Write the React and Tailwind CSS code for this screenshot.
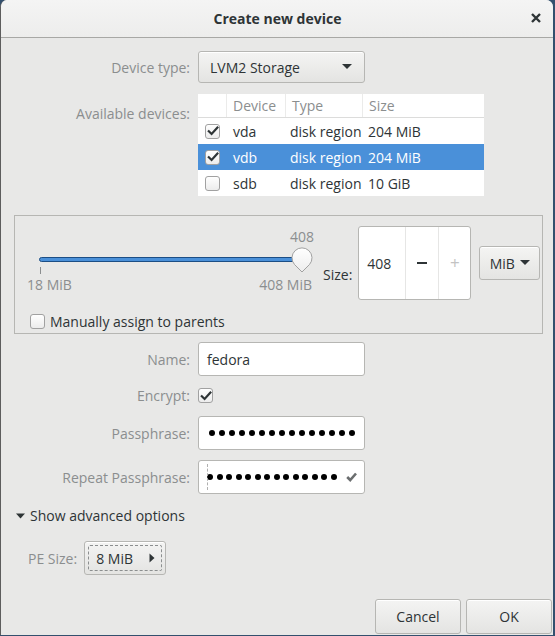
import React from "react";

const F = "font-['Open_Sans',sans-serif]";

function Check({ checked, className = "" }) {
  return (
    <div
      className={`w-[15px] h-[15px] rounded-[3px] border border-[#a1a1a1] bg-gradient-to-b from-white to-[#ececec] flex items-center justify-center shrink-0 ${className}`}
    >
      {checked && (
        <svg width="12" height="12" viewBox="0 0 12 12">
          <path d="M1.8 6.2 L4.6 9 L10.4 2.6" fill="none" stroke="#2e3436" strokeWidth="2.2" strokeLinecap="square" />
        </svg>
      )}
    </div>
  );
}

function Dots({ n, tight }) {
  return (
    <div className={`flex ${tight ? "gap-[3.5px]" : "gap-[4px]"}`}>
      {Array.from({ length: n }).map((_, i) => (
        <div key={i} className="w-[6px] h-[6px] rounded-full bg-black" />
      ))}
    </div>
  );
}

function Btn({ children, className = "" }) {
  return (
    <div
      className={`flex items-center rounded-[3px] border border-[#b6b6b3] bg-gradient-to-b from-[#f4f4f3] to-[#e4e4e2] shadow-[inset_0_1px_0_white] text-[#2e3436] ${className}`}
    >
      {children}
    </div>
  );
}

const Arrow = () => (
  <svg width="10" height="6" viewBox="0 0 10 6">
    <path d="M0 0 H10 L5 5 Z" fill="#2e3436" />
  </svg>
);

export default function App() {
  const rows = [
    { c: true, d: "vda", t: "disk region", s: "204 MiB", sel: false },
    { c: true, d: "vdb", t: "disk region", s: "204 MiB", sel: true },
    { c: false, d: "sdb", t: "disk region", s: "10 GiB", sel: false },
  ];
  return (
    <div className={`w-[555px] h-[636px] bg-[#33506e] ${F} text-[14px] text-[#2e3436] overflow-hidden`}>
      <div className="w-[553px] h-[635px] rounded-t-[7px] bg-[#e8e8e7] border-l border-[#5d5d5d] flex flex-col overflow-hidden">
        {/* header */}
        <div className="h-[38px] shrink-0 bg-gradient-to-b from-[#f4f4f4] to-[#ededec] border-b border-[#a8a8a5] flex items-center relative">
          <div className="flex-1 text-center font-bold text-[14px] text-[#2e3436] pl-[1px]">Create new device</div>
          <div className="absolute right-[11px] top-[12px]">
            <svg width="12" height="12" viewBox="0 0 12 12">
              <path d="M2 2 L10 10 M10 2 L2 10" stroke="#2e3436" strokeWidth="2.4" />
            </svg>
          </div>
        </div>

        {/* device type */}
        <div className="flex items-center mt-[13px] h-[32px]">
          <div className="w-[190px] text-right pr-[1px] text-[#8b8e8f]">Device type:</div>
          <Btn className="ml-[7px] w-[167px] h-[32px] justify-between pl-[11px] pr-[12px]">
            <span>LVM2 Storage</span>
            <Arrow />
          </Btn>
        </div>

        {/* available devices */}
        <div className="flex mt-[11px]">
          <div className="w-[190px] text-right pr-[1px] text-[#8b8e8f] pt-[9px]">Available devices:</div>
          <div className="ml-[7px] w-[286px] bg-white">
            <div className="flex h-[24px] items-center border-b border-[#dcdcdb] text-[#8b8e8f]">
              <div className="w-[29px] h-full border-r border-[#ebebea]" />
              <div className="w-[59px] h-full border-r border-[#ebebea] pl-[6px] flex items-center">Device</div>
              <div className="w-[77px] h-full border-r border-[#ebebea] pl-[6px] flex items-center">Type</div>
              <div className="flex-1 pl-[6px]">Size</div>
            </div>
            {rows.map((r) => (
              <div
                key={r.d}
                className={`flex items-center h-[26px] ${r.sel ? "bg-[#4a90d9] text-white" : ""}`}
              >
                <div className="w-[29px] flex justify-center">
                  <Check checked={r.c} />
                </div>
                <div className="w-[59px] pl-[6px]">{r.d}</div>
                <div className="w-[77px] pl-[4px]">{r.t}</div>
                <div className="flex-1 pl-[5px]">{r.s}</div>
              </div>
            ))}
          </div>
        </div>

        {/* size frame */}
        <div className="mx-[13px] mt-[19px] h-[119px] border border-[#b6b6b3] w-[529px] flex flex-col">
          <div className="flex items-start pt-[10px]">
            <div className="w-[293px] ml-[10px] relative h-[68px]">
              <div className="absolute left-[277px] top-[0px] text-[#8b8e8f] -translate-x-1/2">408</div>
              <div className="absolute left-[14px] right-[8px] top-[31px] h-[5px] rounded-full bg-[#4a90d9] border border-[#1c4e85]" />
              <div className="absolute left-[15px] top-[41px] w-px h-[7px] bg-[#8b8e8f]" />
              <div className="absolute left-[2px] top-[48px] text-[#8b8e8f]">18 MiB</div>
              <div className="absolute right-[6px] top-[48px] text-[#8b8e8f]">408 MiB</div>
              <svg className="absolute left-[266px] top-[21px]" width="22" height="26" viewBox="0 0 22 26">
                <defs>
                  <linearGradient id="kg" x1="0" y1="0" x2="0" y2="1">
                    <stop offset="0" stopColor="#ffffff" />
                    <stop offset="1" stopColor="#ededed" />
                  </linearGradient>
                </defs>
                <path d="M11 25 L3.5 17.5 A10 10 0 1 1 18.5 17.5 Z" fill="url(#kg)" stroke="#a1a1a1" strokeWidth="1" />
              </svg>
            </div>
            <div className="mt-[38px] ml-[5px] text-[#2e3436]">Size:</div>
            <div className="ml-[6px] w-[113px] h-[74px] bg-white border border-[#b6b6b3] rounded-[3px] flex">
              <div className="w-[46px] flex items-center pl-[8px]">408</div>
              <div className="w-[33px] border-l border-[#e6e6e5] flex items-center justify-center">
                <div className="w-[10px] h-[2px] bg-[#2e3436]" />
              </div>
              <div className="flex-1 border-l border-[#e6e6e5] flex items-center justify-center text-[#c3c3c3] text-[17px]">+</div>
            </div>
            <Btn className="ml-[8px] mt-[20px] w-[61px] h-[34px] gap-[5px] justify-center">
              <span>MiB</span>
              <Arrow />
            </Btn>
          </div>
          <div className="flex items-center mt-[11px] ml-[15px] gap-[5px]">
            <Check checked={false} />
            <span>Manually assign to parents</span>
          </div>
        </div>

        {/* form */}
        <div className="flex items-center mt-[8px] h-[34px]">
          <div className="w-[190px] text-right pr-[1px] text-[#8b8e8f]">Name:</div>
          <div className="ml-[7px] w-[167px] h-[34px] bg-white border border-[#b6b6b3] rounded-[3px] flex items-center pl-[8px]">fedora</div>
        </div>
        <div className="flex items-center mt-[12px] h-[15px]">
          <div className="w-[190px] text-right pr-[1px] text-[#8b8e8f]">Encrypt:</div>
          <Check checked className="ml-[7px]" />
        </div>
        <div className="flex items-center mt-[13px] h-[34px]">
          <div className="w-[190px] text-right pr-[1px] text-[#8b8e8f]">Passphrase:</div>
          <div className="ml-[7px] w-[167px] h-[34px] bg-white border border-[#b6b6b3] rounded-[3px] flex items-center pl-[10px]">
            <Dots n={15} />
          </div>
        </div>
        <div className="flex items-center mt-[10px] h-[34px]">
          <div className="w-[190px] text-right pr-[1px] text-[#8b8e8f]">Repeat Passphrase:</div>
          <div className="ml-[7px] w-[167px] h-[34px] bg-white border border-[#b6b6b3] rounded-[3px] flex items-center pl-[8px] relative">
            <div className="absolute left-[8px] top-[3px] bottom-[3px] border-l border-dashed border-[#b0b0b0]" />
            <Dots n={14} tight />
            <svg className="ml-[9px]" width="11" height="10" viewBox="0 0 11 10">
              <path d="M1.2 5 L4.2 8 L10 1.5" fill="none" stroke="#6b6e6f" strokeWidth="2.6" />
            </svg>
          </div>
        </div>

        <div className="flex items-center mt-[11px] ml-[15px] gap-[4px]">
          <svg width="10" height="6" viewBox="0 0 10 6">
            <path d="M0 0.5 H9 L4.5 5.5 Z" fill="#2e3436" />
          </svg>
          <span>Show advanced options</span>
        </div>

        <div className="flex items-center mt-[15px] ml-[27px] h-[34px]">
          <span className="text-[#8b8e8f]">PE Size:</span>
          <Btn className="ml-[7px] w-[82px] h-[34px] relative pl-[11px]">
            <div className="absolute inset-[3px] border border-dashed border-[#8b8e8f] rounded-[2px]" />
            <span className="mr-[16px]">8 MiB</span>
            <svg width="6" height="10" viewBox="0 0 6 10">
              <path d="M0.5 0.5 V9.5 L5.5 5 Z" fill="#2e3436" />
            </svg>
          </Btn>
        </div>

        <div className="flex justify-end gap-[5px] mt-auto mb-[1px] mr-[1px]">
          <Btn className="w-[86px] h-[35px] justify-center">Cancel</Btn>
          <Btn className="w-[86px] h-[35px] justify-center">OK</Btn>
        </div>
      </div>
    </div>
  );
}
